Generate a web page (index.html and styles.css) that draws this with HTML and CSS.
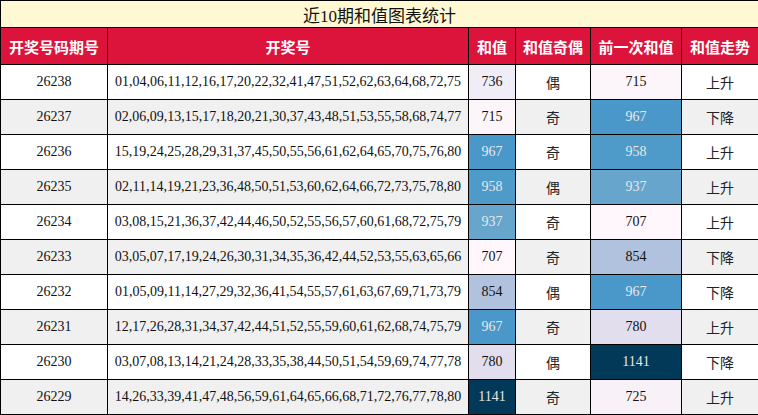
FILE: index.html
```html
<!DOCTYPE html>
<html lang="zh">
<head>
<meta charset="utf-8">
<title>近10期和值图表统计</title>
<link rel="stylesheet" href="styles.css">
</head>
<body>
<table class="stats">
  <colgroup>
    <col class="c-issue"><col class="c-nums"><col class="c-sum"><col class="c-odd"><col class="c-prev"><col class="c-trend">
  </colgroup>
  <tr class="title-row"><td colspan="6">近10期和值图表统计</td></tr>
  <tr class="head-row">
    <th>开奖号码期号</th><th>开奖号</th><th>和值</th><th>和值奇偶</th><th>前一次和值</th><th>和值走势</th>
  </tr>
  <tr class="row"><td>26238</td><td>01,04,06,11,12,16,17,20,22,32,41,47,51,52,62,63,64,68,72,75</td><td style="background:#f1edf6">736</td><td class="cjk">偶</td><td style="background:#fcf5fa">715</td><td class="cjk">上升</td></tr>
  <tr class="row alt"><td>26237</td><td>02,06,09,13,15,17,18,20,21,30,37,43,48,51,53,55,58,68,74,77</td><td style="background:#fcf5fa">715</td><td class="cjk">奇</td><td class="dark" style="background:#4a98c9">967</td><td class="cjk">下降</td></tr>
  <tr class="row"><td>26236</td><td>15,19,24,25,28,29,31,37,45,50,55,56,61,62,64,65,70,75,76,80</td><td class="dark" style="background:#4a98c9">967</td><td class="cjk">奇</td><td class="dark" style="background:#4e9bc9">958</td><td class="cjk">上升</td></tr>
  <tr class="row alt"><td>26235</td><td>02,11,14,19,21,23,36,48,50,51,53,60,62,64,66,72,73,75,78,80</td><td class="dark" style="background:#4e9bc9">958</td><td class="cjk">偶</td><td class="dark" style="background:#67a5cd">937</td><td class="cjk">上升</td></tr>
  <tr class="row"><td>26234</td><td>03,08,15,21,36,37,42,44,46,50,52,55,56,57,60,61,68,72,75,79</td><td class="dark" style="background:#67a5cd">937</td><td class="cjk">奇</td><td style="background:#fff7fb">707</td><td class="cjk">上升</td></tr>
  <tr class="row alt"><td>26233</td><td>03,05,07,17,19,24,26,30,31,34,35,36,42,44,52,53,55,63,65,66</td><td style="background:#fff7fb">707</td><td class="cjk">奇</td><td style="background:#b1c2de">854</td><td class="cjk">下降</td></tr>
  <tr class="row"><td>26232</td><td>01,05,09,11,14,27,29,32,36,41,54,55,57,61,63,67,69,71,73,79</td><td style="background:#b1c2de">854</td><td class="cjk">偶</td><td class="dark" style="background:#4a98c9">967</td><td class="cjk">下降</td></tr>
  <tr class="row alt"><td>26231</td><td>12,17,26,28,31,34,37,42,44,51,52,55,59,60,61,62,68,74,75,79</td><td class="dark" style="background:#4a98c9">967</td><td class="cjk">奇</td><td style="background:#e2deee">780</td><td class="cjk">上升</td></tr>
  <tr class="row"><td>26230</td><td>03,07,08,13,14,21,24,28,33,35,38,44,50,51,54,59,69,74,77,78</td><td style="background:#e2deee">780</td><td class="cjk">偶</td><td class="dark" style="background:#023858">1141</td><td class="cjk">下降</td></tr>
  <tr class="row alt"><td>26229</td><td>14,26,33,39,41,47,48,56,59,61,64,65,66,68,71,72,76,77,78,80</td><td class="dark" style="background:#023858">1141</td><td class="cjk">奇</td><td style="background:#f8f1f8">725</td><td class="cjk">上升</td></tr>
</table>
</body>
</html>
```

FILE: styles.css
```css
html, body {
  margin: 0;
  padding: 0;
  background: #fff;
}

.stats {
  border-collapse: collapse;
  table-layout: fixed;
  width: 758px;
  font-family: "Liberation Serif", "Noto Sans CJK SC", serif;
  font-size: 14px;
  color: #111;
}

.c-issue { width: 107px; }
.c-nums { width: 361px; }
.c-sum { width: 47px; }
.c-odd { width: 75px; }
.c-prev { width: 91px; }
.c-trend { width: 77px; }

.stats td, .stats th {
  border: 1px solid #000;
  padding: 0;
  text-align: center;
  vertical-align: middle;
  white-space: nowrap;
  overflow: hidden;
}

.title-row td {
  height: 26px;
  background: #fff8d2;
  font-size: 17px;
  color: #111;
}

.head-row th {
  height: 36px;
  background: #dc143c;
  color: #fff;
  font-family: "Noto Sans CJK SC", sans-serif;
  font-weight: bold;
  font-size: 15px;
}

.row td {
  height: 34px;
  background: #fff;
}

.row.alt td {
  background: #f0f0f0;
}

.row td.cjk {
  font-family: "Noto Sans CJK SC", sans-serif;
  font-size: 14px;
  color: #222;
}

.row td.dark {
  color: #e8e8e8;
}
```
